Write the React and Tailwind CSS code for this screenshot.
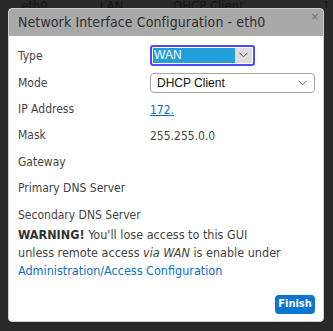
const labelFont = { fontFamily: '"DejaVu Sans Condensed", "DejaVu Sans", sans-serif' };

function Chevron({ className }) {
  return (
    <svg width="9" height="6" viewBox="0 0 9 6" className={className}>
      <path d="M0.5 0.8 L4.5 4.8 L8.5 0.8" fill="none" stroke="#555" strokeWidth="1" />
    </svg>
  );
}

function Row({ label, h, children }) {
  return (
    <div className={`flex items-center ${h}`}>
      <div className="w-[132px] shrink-0 text-[12px] text-[#444]">{label}</div>
      <div className="flex-1">{children}</div>
    </div>
  );
}

export default function App() {
  return (
    <div
      className="relative w-[333px] h-[331px] overflow-hidden bg-[#292929]"
      style={labelFont}
    >
      {/* table row behind the overlay */}
      <div className="flex h-[8px] items-end text-[13px] leading-[13px] text-[#15151c] overflow-hidden">
        <span className="ml-[21px] -mb-[4px]">eth0</span>
        <span className="ml-[52px] -mb-[4px]">LAN</span>
        <span className="ml-[50px] -mb-[4px]">DHCP Client</span>
        <span className="ml-auto mr-[3px] -mb-[4px] underline">1</span>
      </div>

      {/* dialog */}
      <div className="absolute left-[8px] top-[8px] w-[316px] h-[314px] rounded-[4px] bg-white border border-[#cfcfcf] flex flex-col overflow-hidden">
        <div className="relative h-[27px] shrink-0 bg-[#a9a9a9] pl-[9px] flex items-center">
          <span className="text-[14px] text-[#2e2e2e] tracking-[0.1px]">
            Network Interface Configuration - eth0
          </span>
          <span className="absolute right-[4px] top-[0px] text-[11px] font-bold text-[#7a7a7a]">×</span>
        </div>

        <div className="pl-[9px] pr-[8px] pt-[7px] flex flex-col flex-1">
          <Row label="Type" h="h-[26px]">
            <div className="w-[105px] h-[21px] -mt-[2px] rounded-[3px] border-2 border-[#5148ff] bg-white flex items-stretch p-[1px]">
              <div className="flex-1 bg-[#229ed9] text-white text-[12px] leading-[15px] pl-[1px]" style={{ fontFamily: '"Liberation Sans", Arial, sans-serif' }}>
                WAN
              </div>
              <div className="w-[17px] bg-[#dcdcdc] flex items-center justify-center">
                <Chevron />
              </div>
            </div>
          </Row>
          <Row label="Mode" h="h-[27px]">
            <div className="w-[165px] h-[20px] rounded-[4px] border border-[#a5a5a5] bg-white flex items-center justify-between pl-[6px] pr-[7px]">
              <span className="text-[12px] text-[#111]" style={{ fontFamily: '"Liberation Sans", Arial, sans-serif' }}>
                DHCP Client
              </span>
              <Chevron />
            </div>
          </Row>
          <Row label="IP Address" h="h-[26px]">
            <span className="text-[12px] text-[#0a6fc7] underline">172.</span>
          </Row>
          <Row label="Mask" h="h-[26px]">
            <span className="text-[12px] text-[#444]">255.255.0.0</span>
          </Row>
          <Row label="Gateway" h="h-[27px]" />
          <Row label="Primary DNS Server" h="h-[26px]" />
          <Row label="Secondary DNS Server" h="h-[27px]" />

          <p className="-mt-[2px] text-[12.5px] leading-[18px] text-[#444]">
            <b className="text-[#333]">WARNING!</b> You'll lose access to this GUI
            <br />
            unless remote access <i>via WAN</i> is enable under
            <br />
            <a className="text-[#0a6fc7]">Administration/Access Configuration</a>
          </p>

          <div className="mt-auto mb-[7px] flex justify-end">
            <button className="h-[19px] w-[40px] rounded-[4px] bg-[#0c74d2] text-white text-[11px] font-bold">
              Finish
            </button>
          </div>
        </div>
      </div>
    </div>
  );
}
